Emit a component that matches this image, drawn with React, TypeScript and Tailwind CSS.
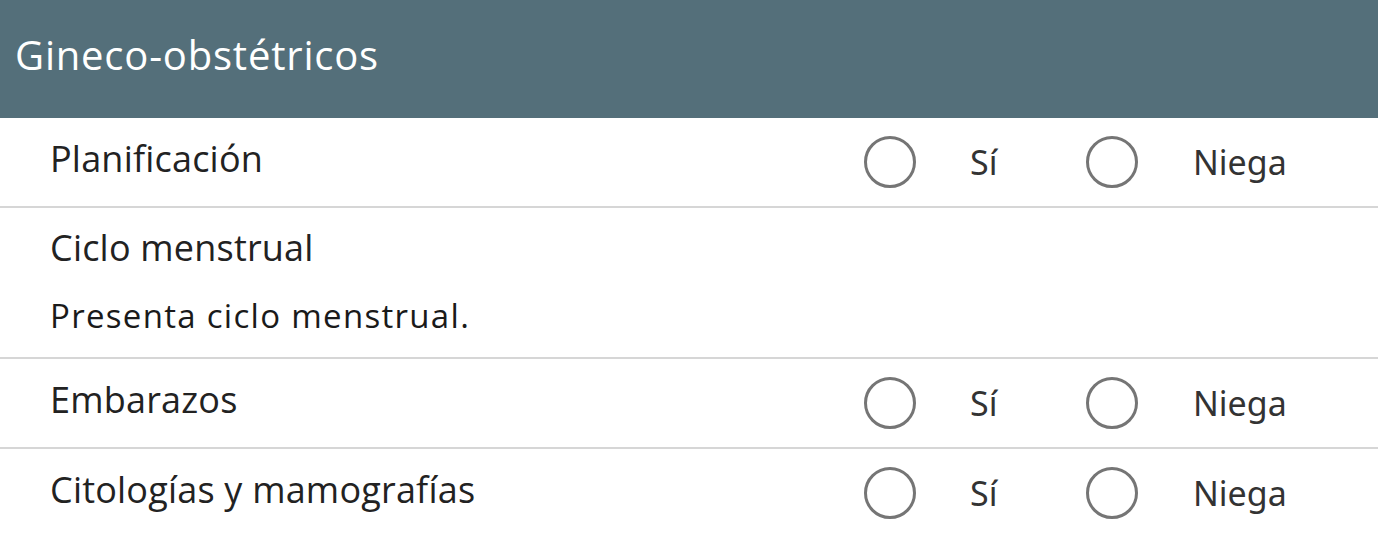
import { Fragment } from "react"

const rows = [
  { label: "Planificación", radios: true },
  { label: "Ciclo menstrual", note: "Presenta ciclo menstrual." },
  { label: "Embarazos", radios: true },
  { label: "Citologías y mamografías", radios: true },
]

function Radio() {
  return <span className="block shrink-0 w-[52px] h-[52px] rounded-full border-[3px] border-[#757575] bg-white" />
}

export default function App() {
  return (
    <div className="w-[1378px] h-[534px] overflow-hidden bg-white font-['Open_Sans','Noto_Sans',sans-serif] text-[#222]">
      <div className="h-[118px] bg-[#546f7a] flex items-center pl-[15px] pb-[8px]">
        <h2 className="text-[40px] tracking-[0.8px] text-white leading-none">Gineco-obstétricos</h2>
      </div>
      {rows.map((row, i) => (
        <Fragment key={row.label}>
          {i > 0 && <div className="h-[2px] bg-[#d6d6d6]" />}
          {row.radios ? (
            <div className="h-[88px] flex items-center pl-[50px]">
              <span className="flex-1 text-[36px] tracking-[0.2px] pb-[6px]">{row.label}</span>
              <div className="w-[514px] flex items-center font-['Noto_Sans',sans-serif] text-[34px] text-[#333]">
                <Radio />
                <span className="ml-[54px] w-[116px]">Sí</span>
                <Radio />
                <span className="ml-[55px]">Niega</span>
              </div>
            </div>
          ) : (
            <div className="h-[149px] pl-[50px] pt-[20px]">
              <div className="text-[36px] tracking-[0.2px] leading-[40px]">{row.label}</div>
              <div className="text-[33px] tracking-[1.3px] leading-[40px] mt-[28px] text-[#1a1a1a]">{row.note}</div>
            </div>
          )}
        </Fragment>
      ))}
    </div>
  )
}
